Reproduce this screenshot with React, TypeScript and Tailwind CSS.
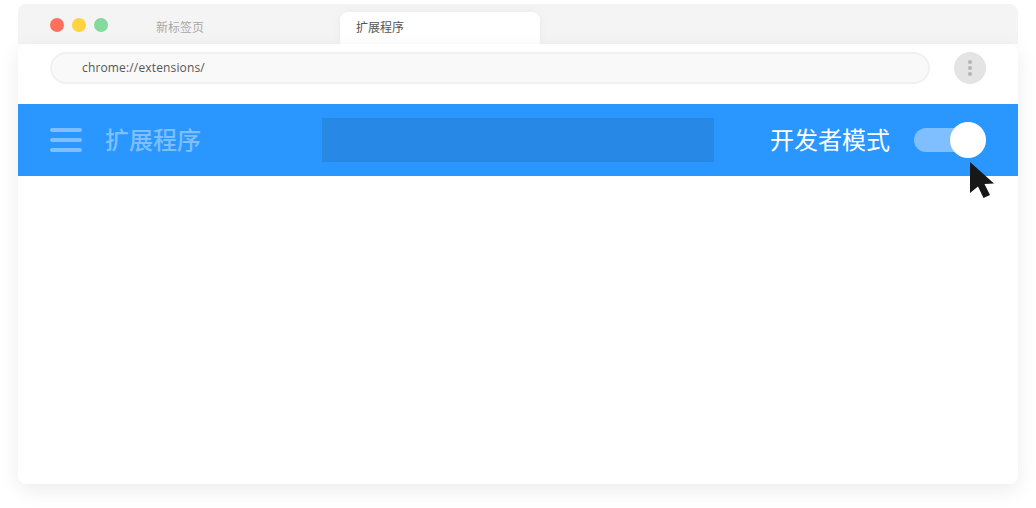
import { useState } from "react";

const cjkFont = "font-['Open_Sans','Noto_Sans_CJK_SC',sans-serif]";

function TrafficLights() {
  return (
    <div className="flex gap-2">
      <span className="h-3.5 w-3.5 rounded-full bg-[#ff6f5e]" />
      <span className="h-3.5 w-3.5 rounded-full bg-[#ffd23f]" />
      <span className="h-3.5 w-3.5 rounded-full bg-[#84d99d]" />
    </div>
  );
}

function MenuIcon() {
  return (
    <div className="flex w-8 flex-col gap-1.5">
      <span className="h-1 rounded-full bg-[#7fbfff]" />
      <span className="h-1 rounded-full bg-[#7fbfff]" />
      <span className="h-1 rounded-full bg-[#7fbfff]" />
    </div>
  );
}

function Cursor() {
  return (
    <svg
      className="absolute left-[952px] top-[118px]"
      width="26"
      height="40"
      viewBox="0 0 26 40"
    >
      <path
        d="M0 0 L24 21.5 L14.5 22 L20 33 L13.5 36 L8 24.5 L0 31 Z"
        fill="#171717"
      />
    </svg>
  );
}

export default function App() {
  const [devMode] = useState(true);

  return (
    <div className={`h-[508px] w-[1036px] overflow-hidden bg-white px-[18px] pt-1 ${cjkFont}`}>
      <div className="flex h-10 items-start rounded-t-lg bg-[#f4f4f4] pl-8">
        <div className="mt-3.5">
          <TrafficLights />
        </div>
        <span className="ml-12 mt-[14px] w-[184px] text-xs leading-5 text-[#a8a8a8]">新标签页</span>
        <div className="mt-2 flex h-8 w-[200px] items-start rounded-t-lg bg-white pl-4 pt-1.5 text-xs leading-5 text-[#555] shadow-[0_0_10px_rgba(0,0,0,0.05)]">
          扩展程序
        </div>
      </div>

      <div className="relative z-10 h-[440px] rounded-lg bg-white shadow-[0_6px_20px_rgba(0,0,0,0.08)]">
        <div className="flex h-[60px] items-start gap-6 px-8 pt-2">
          <div className="flex h-8 flex-1 items-center rounded-full border-2 border-[#f1f1f1] bg-[#f9f9f9] pl-[30px] text-xs tracking-[0.15px] text-[#555]">
            chrome://extensions/
          </div>
          <div className="flex h-8 w-8 flex-col items-center justify-center gap-[2px] rounded-full bg-[#e4e4e4]">
            <span className="h-1 w-1 rounded-full bg-[#b4b4b4]" />
            <span className="h-1 w-1 rounded-full bg-[#b4b4b4]" />
            <span className="h-1 w-1 rounded-full bg-[#b4b4b4]" />
          </div>
        </div>

        <div className="flex h-[72px] items-center bg-[#2997ff] px-8">
          <MenuIcon />
          <span className="ml-[23px] w-[217px] text-2xl font-medium text-[#7fbfff]">扩展程序</span>
          <div className="h-11 w-[392px] bg-[#2888e6]" />
          <span className="ml-14 text-2xl text-white">开发者模式</span>
          <div className="relative ml-6 h-6 w-[72px] rounded-full bg-[#80bfff]">
            {devMode && (
              <span className="absolute -top-1.5 right-0 h-9 w-9 rounded-full bg-white" />
            )}
          </div>
        </div>

        <Cursor />
      </div>
    </div>
  );
}
